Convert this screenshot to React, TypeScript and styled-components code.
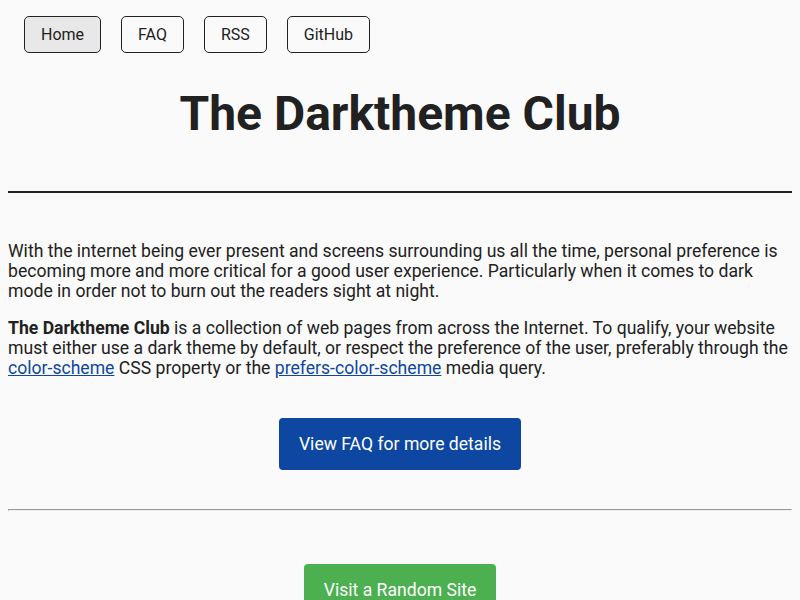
import React from 'react'
import styled, { createGlobalStyle } from 'styled-components'

const GlobalStyle = createGlobalStyle`
  body {
    margin: 8px;
    background-color: #fafafa;
    color: #212121;
    font-family: Roboto, 'Liberation Sans', sans-serif;
  }
`

const Nav = styled.nav`
  display: flex;
  gap: 20px;
  padding: 8px 16px;
`

const NavButton = styled.a<{ active?: boolean }>`
  display: block;
  padding: 8px 16px;
  border: 1px solid #212121;
  border-radius: 5px;
  background-color: ${(p) => (p.active ? '#e8e8e8' : 'transparent')};
  color: #212121;
  font-size: 16px;
  line-height: 19px;
  text-decoration: none;
`

const Title = styled.h1`
  margin: 25px 0 49px;
  text-align: center;
  font-size: 48px;
  font-weight: 700;
  line-height: 56px;
`

const ThickRule = styled.hr`
  margin: 0 0 48px;
  border: none;
  border-top: 2px solid #212121;
`

const Paragraph = styled.p`
  margin: 0 0 17px;
  font-size: 17.6px;
  line-height: 20px;
`

const Link = styled.a`
  color: #0d47a1;
  text-decoration: underline;
`

const Center = styled.div<{ top: number }>`
  display: flex;
  justify-content: center;
  margin-top: ${(p) => p.top}px;
`

const ActionButton = styled.a<{ tone: string }>`
  display: block;
  padding: 16px 20px;
  border-radius: 4px;
  background-color: ${(p) => p.tone};
  color: #fff;
  font-size: 17.6px;
  line-height: 20px;
  text-decoration: none;
`

const ThinRule = styled.hr`
  margin: 39px 0 0;
`

export default function App() {
  return (
    <>
      <GlobalStyle />
      <Nav>
        <NavButton active href="#">Home</NavButton>
        <NavButton href="#">FAQ</NavButton>
        <NavButton href="#">RSS</NavButton>
        <NavButton href="#">GitHub</NavButton>
      </Nav>
      <Title>The Darktheme Club</Title>
      <ThickRule />
      <Paragraph>
        With the internet being ever present and screens surrounding us all the time, personal preference is
        becoming more and more critical for a good user experience. Particularly when it comes to dark mode in
        order not to burn out the readers sight at night.
      </Paragraph>
      <Paragraph>
        <b>The Darktheme Club</b> is a collection of web pages from across the Internet. To qualify, your
        website must either use a dark theme by default, or respect the preference of the user, preferably
        through the <Link href="#">color-scheme</Link> CSS property or the{' '}
        <Link href="#">prefers-color-scheme</Link> media query.
      </Paragraph>
      <Center top={40}>
        <ActionButton tone="#0d47a1" href="#">View FAQ for more details</ActionButton>
      </Center>
      <ThinRule />
      <Center top={53}>
        <ActionButton tone="#4caf50" href="#">Visit a Random Site</ActionButton>
      </Center>
    </>
  )
}
